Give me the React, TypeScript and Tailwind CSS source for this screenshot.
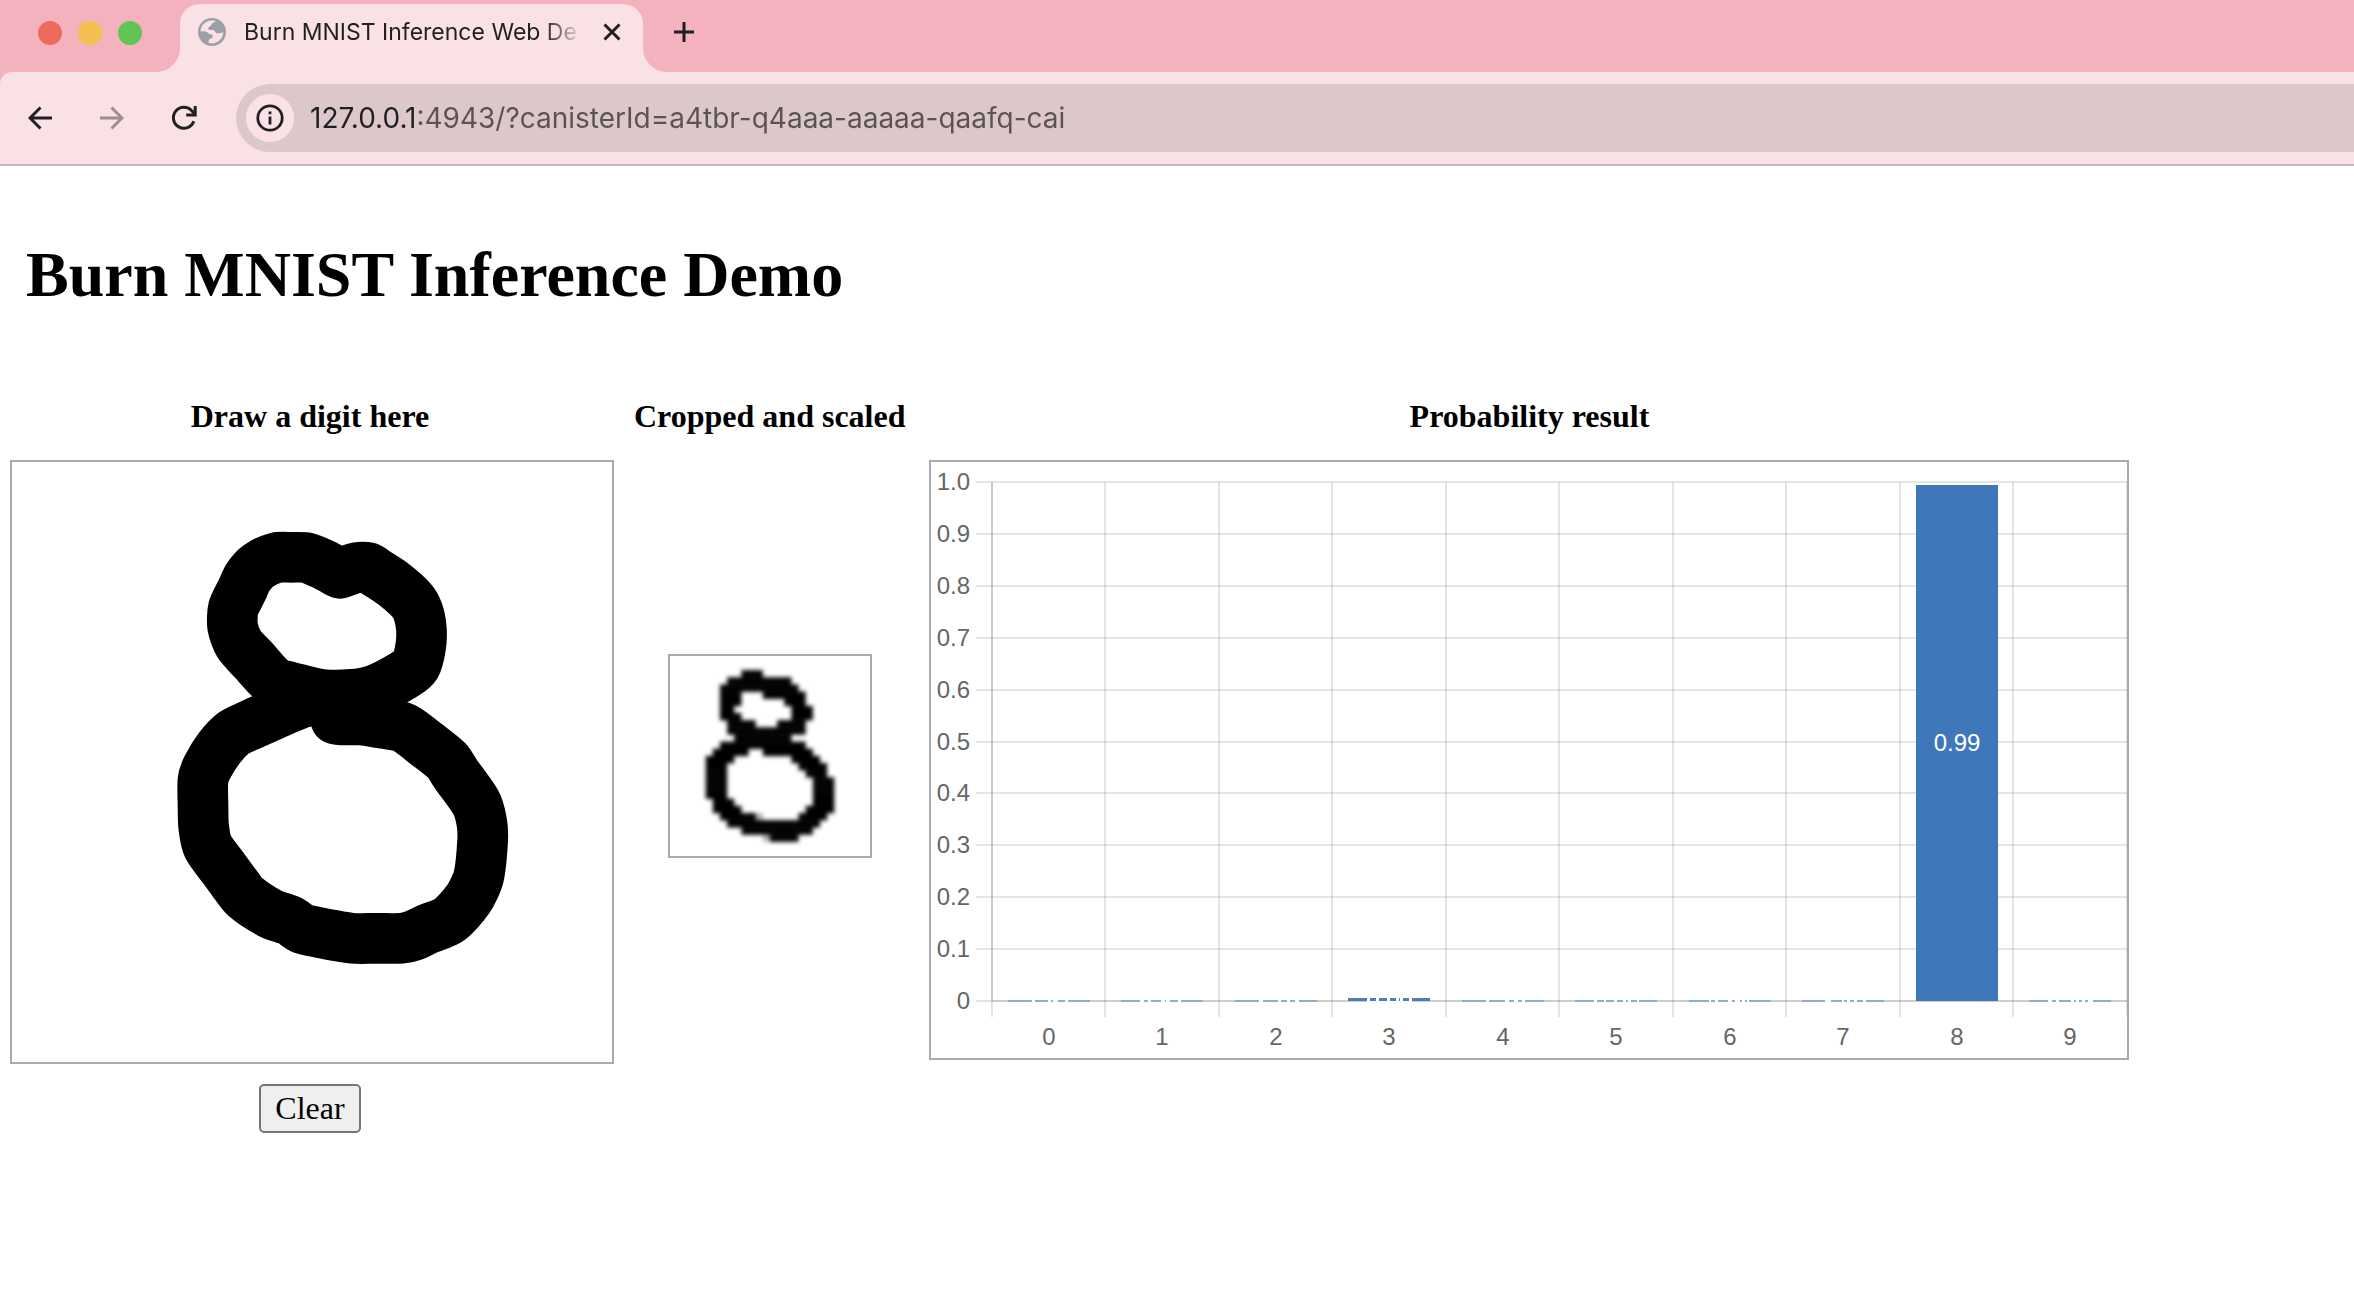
import React from "react";

type Span = [number, number];

const BAR_WIDTH = 82;
const PLOT = { left: 61, right: 1196, top: 20, bottom: 539 };
const COLUMN = (PLOT.right - PLOT.left) / 10;

const yTicks = ["1.0", "0.9", "0.8", "0.7", "0.6", "0.5", "0.4", "0.3", "0.2", "0.1", "0"];

/* Visible pieces of each near-zero bar; the white value label hides the rest. */
const smallBars: { digit: number; height: number; color: string; parts: Span[] }[] = [
  { digit: 0, height: 2, color: "#8aaed8", parts: [[0, 24], [27, 40], [43, 45], [50, 57], [60, 82]] },
  { digit: 1, height: 2, color: "#8aaed8", parts: [[0, 19], [23, 27], [30, 40], [44, 45], [49, 57], [60, 82]] },
  { digit: 2, height: 2, color: "#8aaed8", parts: [[0, 24], [28, 43], [46, 52], [55, 60], [64, 82]] },
  { digit: 3, height: 4, color: "#4a7fbe", parts: [[0, 19], [22, 28], [31, 39], [42, 48], [51, 52], [55, 61], [64, 82]] },
  { digit: 4, height: 2, color: "#8aaed8", parts: [[0, 24], [27, 43], [47, 52], [56, 60], [63, 82]] },
  { digit: 5, height: 2, color: "#8aaed8", parts: [[0, 19], [22, 29], [31, 39], [42, 48], [51, 53], [56, 62], [64, 82]] },
  { digit: 6, height: 2, color: "#8aaed8", parts: [[0, 20], [22, 26], [29, 39], [43, 46], [51, 53], [56, 58], [60, 82]] },
  { digit: 7, height: 2, color: "#8aaed8", parts: [[0, 23], [29, 40], [42, 45], [48, 52], [55, 61], [64, 82]] },
  { digit: 9, height: 2, color: "#8aaed8", parts: [[0, 19], [23, 27], [30, 42], [45, 47], [50, 53], [56, 59], [64, 82]] },
];

/* Runs of dark cells in the 28x28 image: row, first column, last column. */
const cells: [number, number, number][] = [
  [2, 10, 12], [3, 8, 16], [4, 7, 17], [5, 7, 9], [5, 13, 18], [6, 7, 9], [6, 16, 18],
  [7, 7, 8], [7, 17, 19], [8, 7, 9], [8, 17, 19], [9, 8, 11], [9, 15, 18], [10, 8, 18],
  [11, 9, 16], [12, 7, 18], [13, 6, 10], [13, 13, 19], [14, 5, 8], [14, 17, 20],
  [15, 5, 7], [15, 18, 21], [16, 5, 7], [16, 19, 21], [17, 5, 7], [17, 20, 22],
  [18, 5, 7], [18, 20, 22], [19, 5, 7], [19, 20, 22], [20, 6, 8], [20, 20, 22],
  [21, 6, 9], [21, 19, 22], [22, 7, 11], [22, 18, 21], [23, 8, 20], [24, 10, 19], [25, 14, 17],
];

/* Pen positions of the two strokes of the digit. */
const upperStroke: Span[] = [
  [570, 220], [520, 193], [470, 173], [425, 172], [378, 173], [325, 198], [294, 232], [276, 270], [250, 325], [248, 380],
  [267, 432], [310, 480], [372, 545], [440, 566], [516, 583], [605, 583], [676, 569], [760, 526], [797, 496],
  [812, 440], [814, 385], [804, 335], [784, 300], [730, 252], [677, 217], [655, 203], [620, 203], [570, 220],
];
const lowerStroke: Span[] = [
  [557, 88], [580, 90], [632, 90], [698, 100], [763, 114], [830, 163], [892, 213], [916, 250], [978, 338],
  [995, 395], [998, 450], [986, 560], [955, 627], [897, 690], [830, 718], [790, 737], [755, 745], [680, 745], [610, 745],
  [500, 726], [455, 715], [420, 692], [360, 670], [285, 620], [250, 575], [220, 534], [174, 470], [161, 410],
  [159, 345], [159, 270], [172, 232], [208, 174], [250, 130], [290, 110], [370, 74], [450, 40], [500, 28],
];

function smoothPath(points: Span[]) {
  const at = (i: number) => points[Math.max(0, Math.min(points.length - 1, i))];
  let d = `M${points[0][0]} ${points[0][1]}`;
  for (let i = 0; i < points.length - 1; i++) {
    const [p0, p1, p2, p3] = [at(i - 1), at(i), at(i + 1), at(i + 2)];
    const reach = Math.hypot(p2[0] - p1[0], p2[1] - p1[1]) / 4;
    const before = Math.hypot(p2[0] - p0[0], p2[1] - p0[1]);
    const after = Math.hypot(p3[0] - p1[0], p3[1] - p1[1]);
    const c1x = p1[0] + ((p2[0] - p0[0]) / before) * reach;
    const c1y = p1[1] + ((p2[1] - p0[1]) / before) * reach;
    const c2x = p2[0] - ((p3[0] - p1[0]) / after) * reach;
    const c2y = p2[1] - ((p3[1] - p1[1]) / after) * reach;
    d += `C${c1x} ${c1y} ${c2x} ${c2y} ${p2[0]} ${p2[1]}`;
  }
  return d;
}

function TabStrip() {
  return (
    <div className="flex h-[72px] items-end bg-[#f4b1be]">
      <div className="flex h-[72px] items-center gap-4 pb-[6px] pl-[38px]">
        <button aria-label="Close window" className="size-6 rounded-full bg-[#ed6a5e]" />
        <button aria-label="Minimize window" className="size-6 rounded-full bg-[#f5bf4f]" />
        <button aria-label="Zoom window" className="size-6 rounded-full bg-[#61c554]" />
      </div>
      <svg className="ml-[14px] size-6" viewBox="0 0 24 24" aria-hidden="true">
        <path d="M24 0v24H0A24 24 0 0 0 24 0Z" fill="#fae1e5" />
      </svg>
      <div className="flex h-[68px] w-[463px] items-center rounded-t-[20px] bg-[#fae1e5] pb-3 pl-[18px]">
        <svg className="size-7 shrink-0" viewBox="0 0 28 28" aria-hidden="true">
          <circle cx="14" cy="14" r="14" fill="#9aa0a6" />
          <path
            d="M2.500 13.200C2.800 7.500 7.400 3 13.200 2.600c1.800-.1 3.300.1 4.300.5-.6 1.300-1.700 1.500-3 2.100-1.400.7-.9 1.900-1.900 2.800-1 .8-2.300.9-2.500 2.200-.2 1.500 1.500 1.800 3.200 1.700 1.900-.1 3.300.3 3.900 1.800.6 1.300 2 1.600 3.600 1.500 1.500-.1 3-.2 4.500-1.200-.1 5.500-3.900 10-9.200 11.200-1.900.5-3.700.4-5.600-.1.500-1.700-.2-3 1.100-4 1.300-.9 3-.7 3.200-2.300.2-1.800-1.300-2.500-3-2.800-1.500-.3-2-1.800-3.700-2.300-1.900-.6-3.800-.5-5.600-.5Z"
            fill="#fae1e5"
          />
        </svg>
        <span className="ml-[18px] w-[346px] shrink-0 whitespace-nowrap font-['Inter'] text-[23px] leading-7 text-[#1f2023] [mask-image:linear-gradient(to_right,#000_300px,transparent_338px)]">
          Burn MNIST Inference Web De
        </span>
        <button aria-label="Close tab" className="ml-3 shrink-0">
          <svg className="size-5" viewBox="0 0 20 20" fill="none" stroke="#1f2023" strokeWidth="3">
            <path d="M2.500 2.500l15 15M17.500 2.500l-15 15" />
          </svg>
        </button>
      </div>
      <svg className="size-6" viewBox="0 0 24 24" aria-hidden="true">
        <path d="M0 0v24H24A24 24 0 0 1 0 0Z" fill="#fae1e5" />
      </svg>
      <button aria-label="New tab" className="mb-[30px] ml-[7px]">
        <svg className="size-5" viewBox="0 0 20 20" fill="none" stroke="#1f2023" strokeWidth="3">
          <path d="M10 0v20M0 10h20" />
        </svg>
      </button>
    </div>
  );
}

function Toolbar() {
  return (
    <div className="bg-[#f4b1be]">
      <div className="flex h-[94px] items-center rounded-tl-xl border-b-2 border-[#c9b5b8] bg-[#fae1e5] pl-[28px]">
        <button aria-label="Back">
          <svg className="size-6" viewBox="0 0 24 24" fill="none" stroke="#1f2023" strokeWidth="3">
            <path d="M24 12H2.500M12.500 1.500L2 12l10.500 10.500" />
          </svg>
        </button>
        <button aria-label="Forward" className="ml-12">
          <svg className="size-6" viewBox="0 0 24 24" fill="none" stroke="#9d8e91" strokeWidth="3">
            <path d="M0 12h21.500M11.500 1.500L22 12 11.500 22.500" />
          </svg>
        </button>
        <button aria-label="Reload" className="ml-[47px]">
          <svg className="size-[26px]" viewBox="0 0 26 26" fill="none" stroke="#1f2023" strokeWidth="3">
            <path d="M22.800 16.200A10.500 10.500 0 1 1 20.800 5.800L24 9.200" />
            <path d="M24.200 1v9H15.200" />
          </svg>
        </button>
        <div className="ml-[39px] flex h-[68px] flex-1 items-center rounded-l-full bg-[#dcc8ca] pl-[10px]">
          <button aria-label="View site information" className="flex size-12 items-center justify-center rounded-full bg-[#fae1e5]">
            <svg className="size-7" viewBox="0 0 28 28" fill="none" stroke="#1f2023" strokeWidth="2.800">
              <circle cx="14" cy="14" r="12.200" />
              <path d="M14 12.500v8M14 7.500v2.800" />
            </svg>
          </button>
          <input
            aria-label="Address"
            defaultValue="127.0.0.1:4943/?canisterId=a4tbr-q4aaa-aaaaa-qaafq-cai"
            className="ml-4 h-10 flex-1 bg-[linear-gradient(to_right,#1f2023_108px,#5a5253_108px)] bg-clip-text font-['Inter'] text-[28px] text-transparent outline-none"
          />
        </div>
      </div>
    </div>
  );
}

function DrawnDigit() {
  return (
    <svg
      className="block w-full border-2 border-[#aaa]"
      viewBox="0 0 1800 1800"
      fill="none"
      stroke="#000"
      strokeWidth="152"
      strokeLinecap="round"
      strokeLinejoin="round"
      role="img"
      aria-label="Hand-drawn digit 8"
    >
      <path transform="translate(414 114)" d={smoothPath(upperStroke)} />
      <path transform="translate(414 684)" d={smoothPath(lowerStroke)} />
    </svg>
  );
}

function ScaledDigit() {
  return (
    <svg className="block w-[204px] border-2 border-[#aaa]" viewBox="0 0 28 28" role="img" aria-label="Digit 8 scaled to 28 by 28">
      <g className="blur-[0.3px]">
        {cells.map(([row, from, to]) => (
          <rect key={`${row}-${from}`} x={from} y={row - 0.02} width={to - from + 1} height={1.04} />
        ))}
        <rect x="12" y="22" width="1" height="1" opacity="0.3" />
        <rect x="13" y="25" width="1" height="1" opacity="0.3" />
      </g>
    </svg>
  );
}

function ProbabilityChart() {
  const step = (PLOT.bottom - PLOT.top) / 10;
  const barLeft = (digit: number) => Math.round(PLOT.left + COLUMN * (digit + 0.5) - BAR_WIDTH / 2);
  return (
    <svg
      className="block w-full border-2 border-[#aaa] font-['Liberation_Sans'] text-2xl"
      viewBox="0 0 1196 596"
      role="img"
      aria-label="Probability of each digit"
    >
      <g stroke="#000" strokeOpacity="0.1" strokeWidth="2">
        {yTicks.map((tick, i) => {
          const y = Math.round(PLOT.top + step * i);
          return <path key={tick} d={`M45 ${y}H1196`} />;
        })}
        {Array.from({ length: 11 }, (_, i) => {
          const x = Math.floor(PLOT.left + COLUMN * i);
          return <path key={i} d={`M${x} 20V555`} />;
        })}
        <path d="M61 20V539M61 539H1196" />
      </g>
      <g fill="#666">
        {yTicks.map((tick, i) => (
          <text key={tick} x="39" y={Math.round(PLOT.top + step * i) + 8} textAnchor="end">
            {tick}
          </text>
        ))}
        {Array.from({ length: 10 }, (_, i) => (
          <text key={i} x={Math.round(PLOT.left + COLUMN * (i + 0.5))} y="583" textAnchor="middle">
            {i}
          </text>
        ))}
      </g>
      {smallBars.map(({ digit, height, color, parts }) => (
        <g key={digit} fill={color}>
          <rect x={barLeft(digit) + 19} y="535" width="45" height="5" fill="#fff" />
          {parts.map(([from, to]) => (
            <rect key={from} x={barLeft(digit) + from} y={540 - height} width={to - from} height={height - (height > 2 ? 1 : 0)} />
          ))}
        </g>
      ))}
      <rect x={barLeft(8)} y="23" width={BAR_WIDTH} height="516" fill="#3f77ba" />
      <text x={barLeft(8) + BAR_WIDTH / 2} y="289" textAnchor="middle" fill="#fff">
        0.99
      </text>
    </svg>
  );
}

export default function App() {
  return (
    <div className="min-h-screen bg-white font-['Liberation_Serif',serif] text-black">
      <header>
        <TabStrip />
        <Toolbar />
      </header>
      <main className="px-[10px] pt-[77px]">
        <h1 className="pl-4 text-[64px] font-bold leading-[64px]">Burn MNIST Inference Demo</h1>
        <div className="mt-[91px] grid grid-cols-[minmax(0,604px)_auto_minmax(0,1200px)] justify-start gap-y-[26px]">
          <h2 className="pr-1 text-center text-[32px] font-bold leading-9">Draw a digit here</h2>
          <h2 className="whitespace-nowrap pl-5 pr-6 text-center text-[32px] font-bold leading-9">Cropped and scaled</h2>
          <h2 className="text-center text-[32px] font-bold leading-9">Probability result</h2>
          <DrawnDigit />
          <div className="flex items-center justify-center pb-3 pr-1">
            <ScaledDigit />
          </div>
          <ProbabilityChart />
        </div>
        <div className="mt-5 flex max-w-[604px] justify-center">
          <button className="mr-1 h-[49px] rounded-[5px] border-2 border-[#767676] bg-[#efefef] px-[14px] pb-[2px] text-[32px] leading-9">Clear</button>
        </div>
      </main>
    </div>
  );
}
